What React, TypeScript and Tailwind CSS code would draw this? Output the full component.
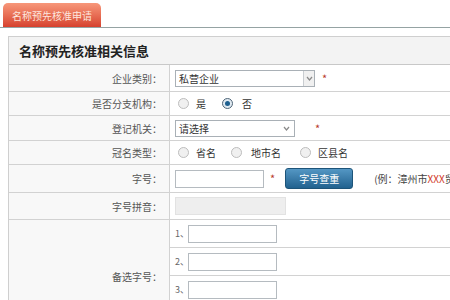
import React from "react";

const font = { fontFamily: '"Noto Sans CJK SC", "Noto Sans", sans-serif' };

function Radio({ checked = false }: { checked?: boolean }) {
  return (
    <span
      className={
        "inline-flex items-center justify-center w-[11px] h-[11px] rounded-full border " +
        (checked ? "border-[#4f6577] bg-[#dfe9f1]" : "border-[#bdbdbd] bg-[#f0f0f0]")
      }
    >
      {checked && <span className="block w-[5px] h-[5px] rounded-full bg-[#1d5f8f]" />}
    </span>
  );
}

function Arrow() {
  return (
    <svg width="7" height="5" viewBox="0 0 7 5">
      <path d="M1 1 L3.5 4 L6 1" stroke="#8a8a8a" strokeWidth="1.2" fill="none" />
    </svg>
  );
}

function Row({ label, h, children }: { label: string; h: string; children?: React.ReactNode }) {
  return (
    <div className={"flex border-b border-[#d2d2d2] " + h}>
      <div className="w-[161px] shrink-0 border-r border-[#d2d2d2] bg-[#f8f8f8] flex items-center justify-end pr-[7px] text-[10px] text-[#555]">
        {label}
      </div>
      <div className="flex-1 flex items-center pl-[5px] text-[10px] text-[#333] whitespace-nowrap">{children}</div>
    </div>
  );
}

function Star({ className = "" }: { className?: string }) {
  return <span className={"text-[#b83a2c] text-[11px] " + className}>*</span>;
}

export default function App() {
  return (
    <div className="w-[450px] h-[300px] overflow-hidden bg-white" style={font}>
      <div className="pl-[3px] pt-[3px] border-b border-[#95a3a3]">
        <div className="w-[98px] h-[24px] rounded-t-[5px] bg-gradient-to-b from-[#f7977a] to-[#d6402e] flex items-center justify-center text-[10px] text-[#fde6de]">
          名称预先核准申请
        </div>
      </div>
      <div className="ml-[8px] mt-[8px] w-[600px] border-l border-t border-[#cfcfcf]">
        <div className="h-[28px] bg-[#f3f3f3] border-b border-[#c8c8c8] flex items-center pl-[10px] text-[13px] font-bold text-[#222]">
          名称预先核准相关信息
        </div>
        <Row label="企业类别：" h="h-[27px]">
          <div className="w-[140px] h-[17px] border border-[#a9b0b6] flex items-center justify-between pl-[3px]">
            <span>私营企业</span>
            <span className="w-[11px] h-full border-l border-[#c9cdd1] bg-[#f0f0f0] flex items-center justify-center">
              <Arrow />
            </span>
          </div>
          <Star className="ml-[7px]" />
        </Row>
        <Row label="是否分支机构：" h="h-[24px]">
          <span className="ml-[3px] flex"><Radio /></span>
          <span className="ml-[7px]">是</span>
          <span className="ml-[16px] flex"><Radio checked /></span>
          <span className="ml-[9px]">否</span>
        </Row>
        <Row label="登记机关：" h="h-[25px]">
          <div className="w-[120px] h-[17px] border border-[#a9b0b6] flex items-center justify-between pl-[3px] pr-[4px]">
            <span>请选择</span>
            <Arrow />
          </div>
          <Star className="ml-[20px]" />
        </Row>
        <Row label="冠名类型：" h="h-[24px]">
          <span className="ml-[3px] flex"><Radio /></span>
          <span className="ml-[7px]">省名</span>
          <span className="ml-[15px] flex"><Radio /></span>
          <span className="ml-[9px]">地市名</span>
          <span className="ml-[19px] flex"><Radio /></span>
          <span className="ml-[7px]">区县名</span>
        </Row>
        <Row label="字号：" h="h-[28px]">
          <div className="w-[89px] h-[18px] border border-[#b5bbc0] bg-white" />
          <Star className="ml-[6px]" />
          <button className="ml-[10px] w-[68px] h-[21px] rounded-[3px] bg-gradient-to-b from-[#5497c4] to-[#21628f] border border-[#1d5479] text-white text-[10px] flex items-center justify-center">
            字号查重
          </button>
          <span className="ml-[21px] text-[#444]">
            (例：漳州市<span className="text-[#d23b2b]">XXX</span>贸易有限公司)
          </span>
        </Row>
        <Row label="字号拼音：" h="h-[27px]">
          <div className="w-[111px] h-[18px] border border-[#e2e2e2] bg-[#eeeeee]" />
        </Row>
        <div className="flex">
          <div className="w-[161px] shrink-0 border-r border-[#d2d2d2] bg-[#f8f8f8] flex items-center justify-end pr-[7px] text-[10px] text-[#555]">
            备选字号：
          </div>
          <div className="flex-1 flex flex-col">
            {["1、", "2、", "3、", "4、"].map((n) => (
              <div key={n} className="h-[28px] border-b border-[#d2d2d2] flex items-center pl-[5px] text-[9px] text-[#666]">
                <span className="w-[13px]">{n}</span>
                <div className="w-[89px] h-[18px] border border-[#b5bbc0] bg-white" />
              </div>
            ))}
          </div>
        </div>
      </div>
    </div>
  );
}
